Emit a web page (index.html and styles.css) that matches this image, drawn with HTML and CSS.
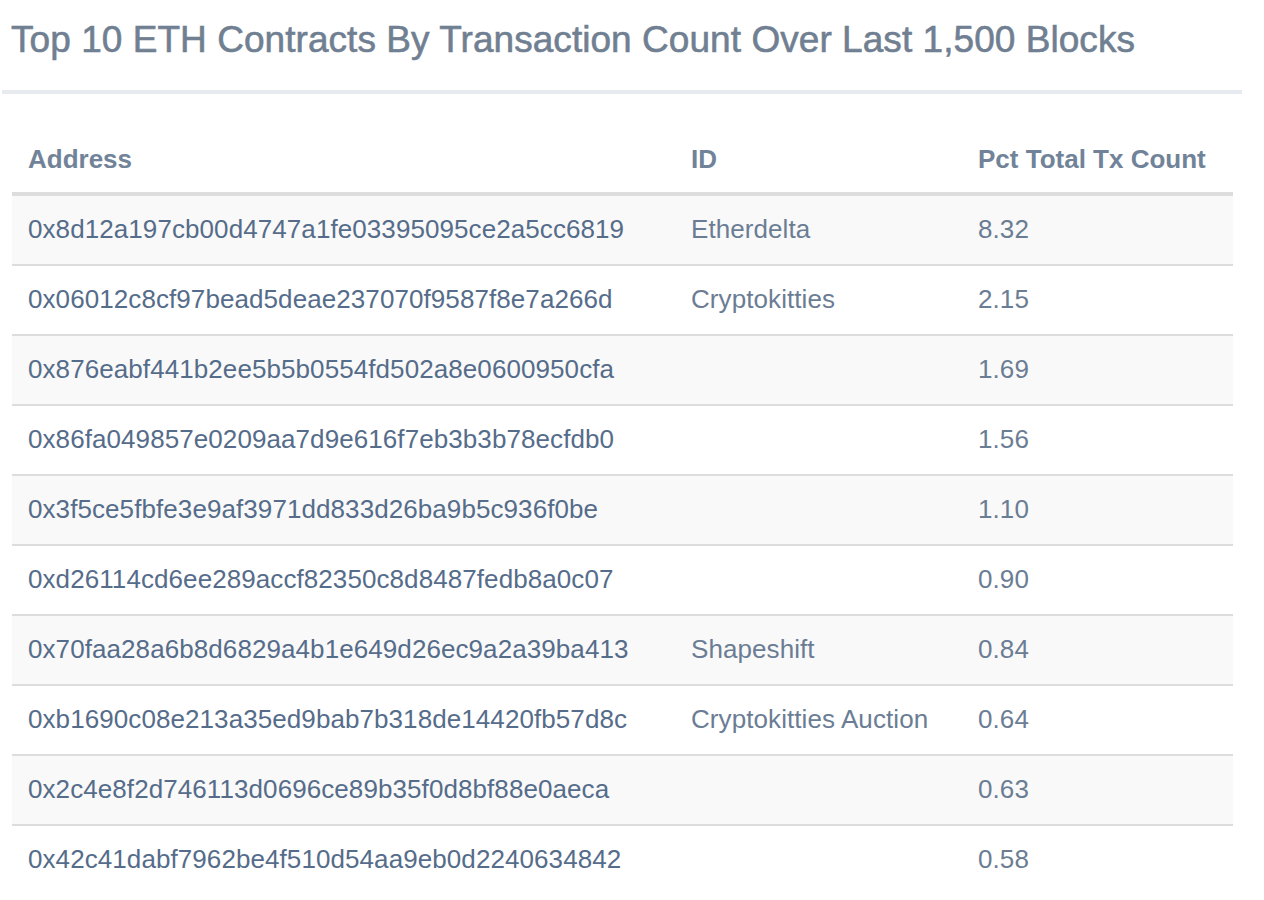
FILE: index.html
```html
<!DOCTYPE html>
<html>
<head>
<meta charset="utf-8">
<link rel="stylesheet" href="styles.css">
</head>
<body>
<div class="page">
  <h1 class="title">Top 10 ETH Contracts By Transaction Count Over Last 1,500 Blocks</h1>
  <div class="rule"></div>
  <table class="tx-table">
    <colgroup>
      <col class="col-addr">
      <col class="col-id">
      <col class="col-pct">
    </colgroup>
    <thead>
      <tr><th>Address</th><th>ID</th><th>Pct Total Tx Count</th></tr>
    </thead>
    <tbody>
      <tr><td class="addr">0x8d12a197cb00d4747a1fe03395095ce2a5cc6819</td><td>Etherdelta</td><td>8.32</td></tr>
      <tr><td class="addr">0x06012c8cf97bead5deae237070f9587f8e7a266d</td><td>Cryptokitties</td><td>2.15</td></tr>
      <tr><td class="addr">0x876eabf441b2ee5b5b0554fd502a8e0600950cfa</td><td></td><td>1.69</td></tr>
      <tr><td class="addr">0x86fa049857e0209aa7d9e616f7eb3b3b78ecfdb0</td><td></td><td>1.56</td></tr>
      <tr><td class="addr">0x3f5ce5fbfe3e9af3971dd833d26ba9b5c936f0be</td><td></td><td>1.10</td></tr>
      <tr><td class="addr">0xd26114cd6ee289accf82350c8d8487fedb8a0c07</td><td></td><td>0.90</td></tr>
      <tr><td class="addr">0x70faa28a6b8d6829a4b1e649d26ec9a2a39ba413</td><td>Shapeshift</td><td>0.84</td></tr>
      <tr><td class="addr">0xb1690c08e213a35ed9bab7b318de14420fb57d8c</td><td>Cryptokitties Auction</td><td>0.64</td></tr>
      <tr><td class="addr">0x2c4e8f2d746113d0696ce89b35f0d8bf88e0aeca</td><td></td><td>0.63</td></tr>
      <tr><td class="addr">0x42c41dabf7962be4f510d54aa9eb0d2240634842</td><td></td><td>0.58</td></tr>
    </tbody>
  </table>
</div>
</body>
</html>
```
FILE: styles.css
```css
html, body {
  margin: 0;
  padding: 0;
  background: #ffffff;
}

body {
  font-family: "Liberation Sans", Arial, Helvetica, sans-serif;
}

.page {
  width: 1264px;
}

.title {
  margin: 0;
  padding: 18px 0 0 11px;
  font-size: 37px;
  line-height: 44px;
  font-weight: normal;
  letter-spacing: 0.05px;
  -webkit-text-stroke: 0.6px #707f91;
  color: #707f91;
  white-space: nowrap;
}

.rule {
  margin: 28px 0 0 2px;
  width: 1240px;
  height: 4px;
  background: #e7eaef;
}

.tx-table {
  margin: 30px 0 0 12px;
  width: 1221px;
  border-collapse: collapse;
  border-spacing: 0;
  table-layout: fixed;
  font-size: 26px;
  line-height: 36px;
}

.col-addr { width: 663px; }
.col-id { width: 287px; }
.col-pct { width: 271px; }

.tx-table th {
  text-align: left;
  font-weight: bold;
  color: #718398;
  padding: 17px 16px 15px 16px;
  border-bottom: 4px solid #dddddd;
  white-space: nowrap;
}

.tx-table td {
  padding: 15px 16px 17px 16px;
  border-top: 2px solid #dddddd;
  color: #6b7d94;
  letter-spacing: 0.08px;
  white-space: nowrap;
}

.tx-table tbody tr:first-child td {
  border-top: 0;
}

.tx-table tbody tr:nth-child(odd) {
  background: #f9f9f9;
}

.tx-table td.addr {
  color: #556c8a;
}
```
